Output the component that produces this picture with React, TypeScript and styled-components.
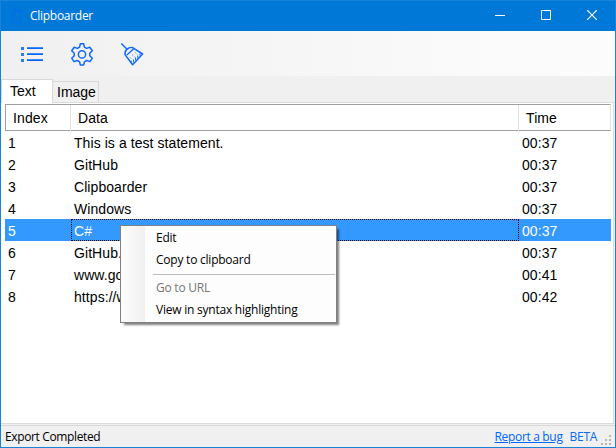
import React from "react";
import styled, { createGlobalStyle, css } from "styled-components";

const Global = createGlobalStyle`
  * { box-sizing: border-box; }
  html, body { margin: 0; padding: 0; overflow: hidden; }
  body { font-family: "Liberation Sans", Arial, sans-serif; color: #000; }
`;

const uiFont = css`
  font-family: "Open Sans", "Noto Sans", sans-serif;
  font-size: 12px;
  white-space: nowrap;
`;

const Window = styled.div`
  width: 616px;
  height: 448px;
  display: flex;
  flex-direction: column;
  border: 1px solid #1883d7;
  background: #f0f0f0;
  position: relative;
`;

const TitleBar = styled.header`
  height: 30px;
  flex: none;
  display: flex;
  align-items: center;
  background: #0078d7;
  color: #fff;
  padding-left: 10px;
`;

const Title = styled.span`
  ${uiFont}
  line-height: 16px;
  margin-left: 7px;
  flex: 1;
  letter-spacing: -0.28px;
`;

const CaptionButton = styled.button`
  width: 46px;
  height: 30px;
  padding: 0 0 2px;
  border: 0;
  background: none;
  display: grid;
  place-items: center;
`;

const Toolbar = styled.nav`
  height: 45px;
  flex: none;
  display: flex;
  gap: 26px;
  align-items: center;
  padding-left: 19px;
  background: linear-gradient(to right, #f0f0f0 0, #fbfbfb 520px, #fcfcfc 100%);
`;

const ToolButton = styled.button`
  width: 24px;
  height: 24px;
  padding: 0;
  border: 0;
  background: none;
  display: block;
  svg { display: block; }
`;

const Tabs = styled.div`
  height: 26px;
  flex: none;
  display: flex;
  align-items: flex-end;
`;

const Tab = styled.div<{ $active?: boolean }>`
  width: ${(p) => (p.$active ? 52 : 46)}px;
  height: ${(p) => (p.$active ? 24 : 21)}px;
  border: 1px solid #d9d9d9;
  border-left-width: ${(p) => (p.$active ? 1 : 0)}px;
  border-bottom: 0;
  margin-bottom: ${(p) => (p.$active ? -1 : 0)}px;
  background: ${(p) => (p.$active ? "#fff" : "#f0f0f0")};
  padding-left: ${(p) => (p.$active ? 8 : 4)}px;
  font-size: 14px;
  line-height: ${(p) => (p.$active ? 22 : 21)}px;
  white-space: nowrap;
  z-index: 1;
`;

const Page = styled.main`
  height: 322px;
  flex: none;
  width: 613px;
  border: 1px solid #dcdcdc;
  border-left: 0;
  background: #fff;
  padding: 1px 1px 0 4px;
`;

const HeaderRow = styled.div`
  display: grid;
  grid-template-columns: 65px 448px 1fr;
  width: 606px;
  height: 27px;
  border: 1px solid #a0a0a0;
  border-right-color: #e0e0e0;
`;

const HeaderCell = styled.div`
  border-right: 1px solid #e0e0e0;
  padding-left: 7px;
  font-size: 14px;
  line-height: 26px;
  letter-spacing: 0.1px;
  &:last-child { border-right: 0; }
`;

const Row = styled.div<{ $selected?: boolean }>`
  display: grid;
  grid-template-columns: 66px 448px 1fr;
  width: 606px;
  height: 22px;
  font-size: 14px;
  line-height: 24px;
  letter-spacing: 0.07px;
  white-space: nowrap;
  background: ${(p) => (p.$selected ? "#3399ff" : "transparent")};
  color: ${(p) => (p.$selected ? "#fff" : "#000")};
`;

const Cell = styled.div<{ $focused?: boolean }>`
  height: 22px;
  padding-left: 3px;
  ${(p) =>
    p.$focused &&
    css`
      outline: 1px dotted #000;
      outline-offset: -1px;
    `}
`;

const StatusBar = styled.footer`
  ${uiFont}
  flex: 1;
  display: flex;
  align-items: center;
  margin-top: 1px;
  border-top: 1px solid #d9d9d9;
  padding: 1px 3px 0 4px;
  line-height: 18px;
`;

const StatusText = styled.span`
  flex: 1;
  letter-spacing: -0.37px;
`;

const BugLink = styled.a`
  color: #0066ff;
  text-decoration: underline;
  letter-spacing: -0.33px;
`;

const Beta = styled.span`
  color: #0a6cf0;
  letter-spacing: -0.3px;
  margin: 0 4px 0 7px;
`;

const Menu = styled.div`
  ${uiFont}
  position: absolute;
  left: 119px;
  top: 224px;
  width: 217px;
  height: 98px;
  border: 1px solid #808080;
  padding: 1px;
  background: linear-gradient(to right, #fcfcfc 1px, #f0f0f0 24px, #fdfdfd 24px);
  box-shadow: 3px 3px 2px -1px rgba(0, 0, 0, 0.5);
`;

const MenuItem = styled.div<{ $disabled?: boolean }>`
  height: 22px;
  line-height: 22px;
  padding-left: 34px;
  letter-spacing: -0.23px;
  color: ${(p) => (p.$disabled ? "#777" : "#000")};
`;

const MenuSeparator = styled.div`
  height: 1px;
  margin: 3px 0 2px 31px;
  background: #bdbdbd;
`;

const rows: [string, string][] = [
  ["This is a test statement.", "00:37"],
  ["GitHub", "00:37"],
  ["Clipboarder", "00:37"],
  ["Windows", "00:37"],
  ["C#", "00:37"],
  ["GitHub.", "00:37"],
  ["www.go", "00:41"],
  ["https://w", "00:42"],
];

const ClipboardIcon = () => (
  <svg width="12" height="16" viewBox="0 0 12 16" fill="none" stroke="#006cf0">
    <path d="M3.5 2.5h-2v12h9v-12h-2M3.5 1.5h5v2h-5z" />
  </svg>
);

const ListIcon = () => (
  <svg width="24" height="24" fill="#0066ff">
    <path d="M1 5h3v3H1zM1 11h3v3H1zM1 17h3v3H1z" opacity=".85" />
    <path d="M7 5.3h16v1.7H7zM7 11.3h16v1.7H7zM7 17.3h16v1.7H7z" />
  </svg>
);

const GearIcon = () => (
  <svg width="24" height="24" fill="none" stroke="#0f68ff" strokeWidth="1.5" strokeLinejoin="round">
    <path d="M10.3 1.8h3.4l.7 3.3 2.2 1.3 3.2-1.1 2.5 3.5-2.5 2.4v2.6l2.5 2.4-2.3 3.4-3.4-1.1-2.2 1.3-.7 3.1h-3.4l-.7-3.1-2.2-1.3-3.4 1.1-2.3-3.4 2.5-2.4v-2.6L1.7 8.8l2.5-3.5 3.2 1.1 2.2-1.3z" />
    <circle cx="12" cy="12.4" r="3.6" />
  </svg>
);

const BroomIcon = () => (
  <svg width="24" height="24" fill="none" stroke="#0f68ff" strokeWidth="1.5" strokeLinejoin="round">
    <path d="M1.3 1.5l6 6M5 12.6c-.6-4.4 3.6-8 7.6-7L22.6 12 12.6 22.7z" />
    <path d="M6.8 13l7-6.3" strokeWidth="1.3" />
    <path d="M11.2 18.6v2.4M13.4 17.4v3M15.6 15.4v3M17.8 13.6v2.6M20 11.6v2" strokeWidth="1" />
    <path d="M9.5 15l2 2M12 12.5l3.4 3M14.8 10l3 3" strokeWidth=".8" strokeDasharray="1 1.3" />
  </svg>
);

const Grip = styled.svg`
  align-self: flex-end;
  margin-bottom: 1px;
`;

export default function App() {
  return (
    <Window>
      <Global />
      <TitleBar>
        <ClipboardIcon />
        <Title>Clipboarder</Title>
        <CaptionButton aria-label="Minimize">
          <svg width="10" height="10" stroke="#fff"><path d="M0 5.5h10" /></svg>
        </CaptionButton>
        <CaptionButton aria-label="Maximize">
          <svg width="10" height="10" fill="none" stroke="#fff"><path d="M.5.5h9v9h-9z" /></svg>
        </CaptionButton>
        <CaptionButton aria-label="Close">
          <svg width="10" height="10" stroke="#fff" strokeWidth="1.2"><path d="M0 0l10 10M10 0L0 10" /></svg>
        </CaptionButton>
      </TitleBar>
      <Toolbar>
        <ToolButton aria-label="List"><ListIcon /></ToolButton>
        <ToolButton aria-label="Settings"><GearIcon /></ToolButton>
        <ToolButton aria-label="Clear"><BroomIcon /></ToolButton>
      </Toolbar>
      <Tabs>
        <Tab $active>Text</Tab>
        <Tab>Image</Tab>
      </Tabs>
      <Page>
        <HeaderRow>
          <HeaderCell>Index</HeaderCell>
          <HeaderCell>Data</HeaderCell>
          <HeaderCell>Time</HeaderCell>
        </HeaderRow>
        {rows.map(([text, time], i) => (
          <Row key={i} $selected={i === 4}>
            <Cell>{i + 1}</Cell>
            <Cell $focused={i === 4}>{text}</Cell>
            <Cell>{time}</Cell>
          </Row>
        ))}
      </Page>
      <StatusBar>
        <StatusText>Export Completed</StatusText>
        <BugLink>Report a bug</BugLink>
        <Beta>BETA</Beta>
        <Grip width="11" height="11" fill="#b5b5b5">
          <path d="M8 0h2v2H8zM4 4h2v2H4zM8 4h2v2H8zM0 8h2v2H0zM4 8h2v2H4zM8 8h2v2H8z" />
        </Grip>
      </StatusBar>
      <Menu>
        <MenuItem>Edit</MenuItem>
        <MenuItem>Copy to clipboard</MenuItem>
        <MenuSeparator />
        <MenuItem $disabled>Go to URL</MenuItem>
        <MenuItem>View in syntax highlighting</MenuItem>
      </Menu>
    </Window>
  );
}
